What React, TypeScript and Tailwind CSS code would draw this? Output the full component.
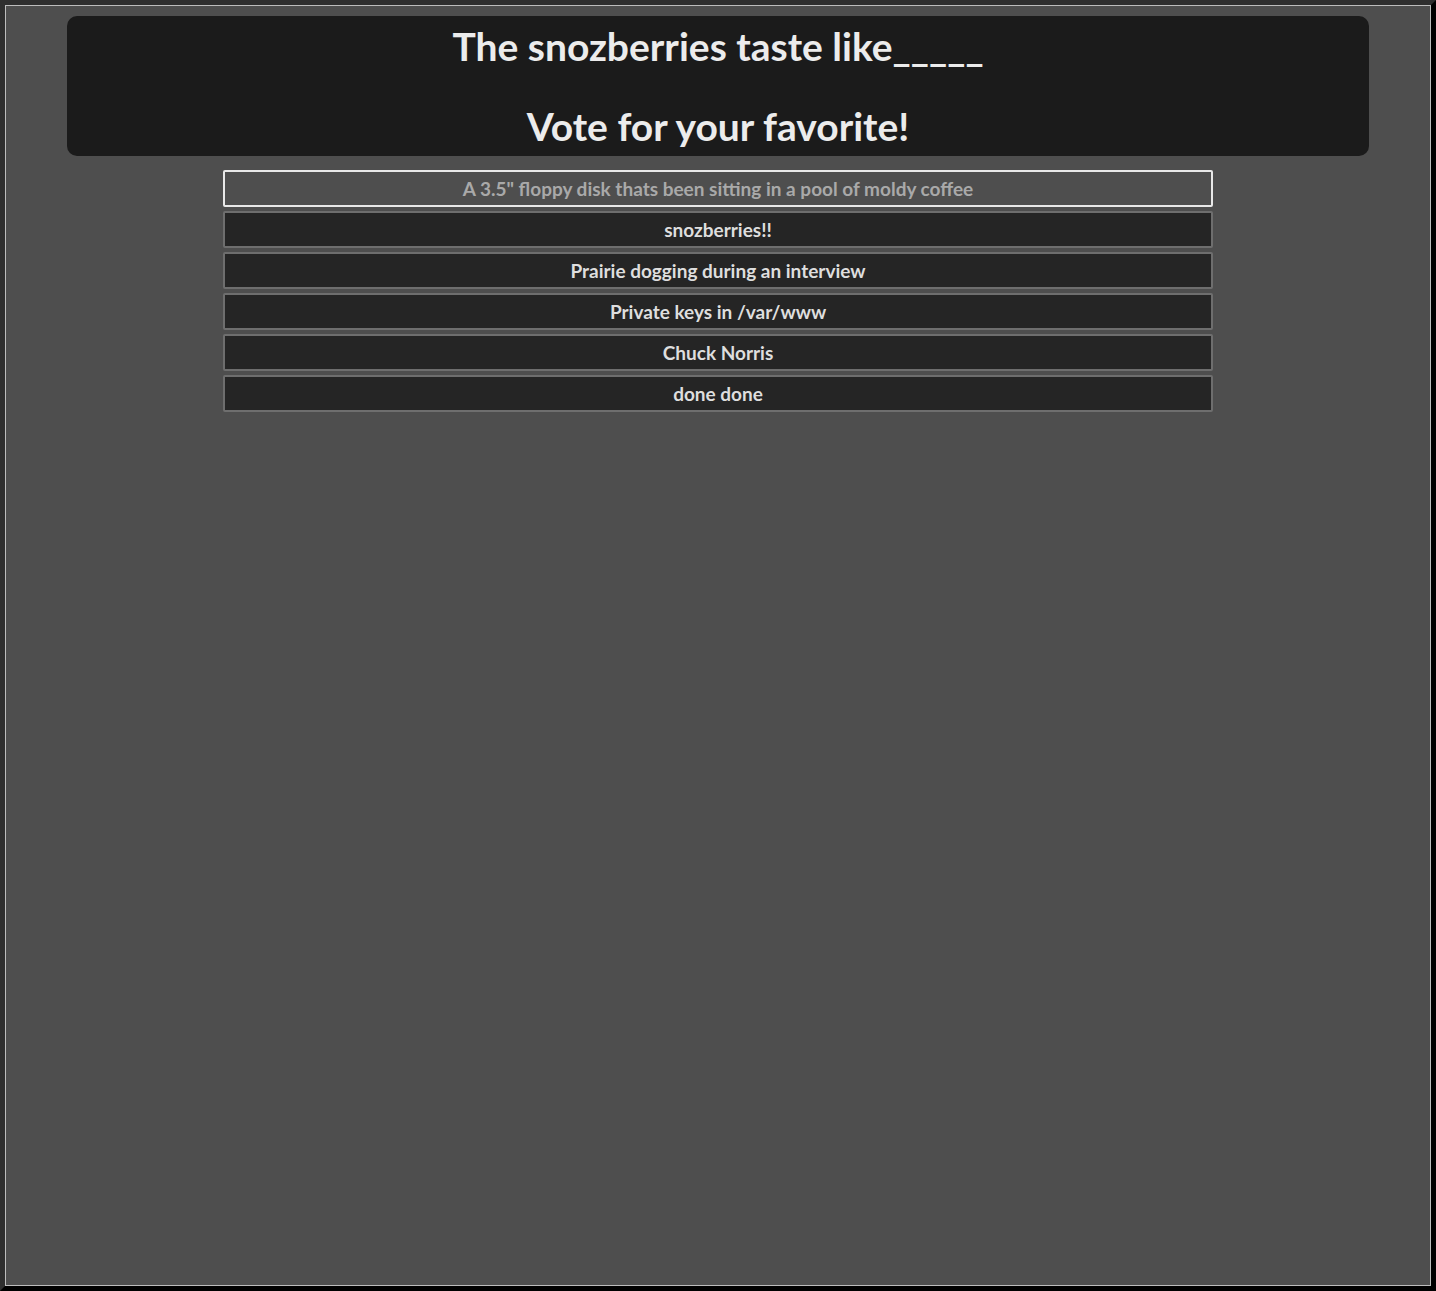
const ANSWERS = [
  "A 3.5\" floppy disk thats been sitting in a pool of moldy coffee",
  "snozberries!!",
  "Prairie dogging during an interview",
  "Private keys in /var/www",
  "Chuck Norris",
  "done done",
];

export default function App() {
  return (
    <div className="h-[1291px] border-[5px] border-t-[#2f2f2f] border-l-[#2f2f2f] border-r-black border-b-black font-['Lato','Liberation_Sans',sans-serif]">
      <div className="h-full border border-[#bdbdbd] bg-[#4e4e4e] pt-[10px]">
        <div className="mx-auto w-[1302px] rounded-[10px] bg-[#1b1b1b] py-[10px] text-center text-[39px] font-bold leading-[40px] text-[#ececec]">
          <div>The snozberries taste like_____</div>
          <div>&nbsp;</div>
          <div>Vote for your favorite!</div>
        </div>
        <div className="mx-auto mt-[14px] flex w-[990px] flex-col gap-[4px]">
          {ANSWERS.map((answer, i) => (
            <button
              key={answer}
              className={
                i === 0
                  ? "h-[37px] rounded-[2px] border-2 border-[#e8e8e8] bg-[#4e4e4e] pt-[2px] text-[19px] font-bold text-[#a9a9a9]"
                  : "h-[37px] rounded-[2px] border-2 border-[#6e6e6e] bg-[#252525] pt-[2px] text-[19px] font-bold text-[#dedede]"
              }
            >
              {answer}
            </button>
          ))}
        </div>
      </div>
    </div>
  );
}
